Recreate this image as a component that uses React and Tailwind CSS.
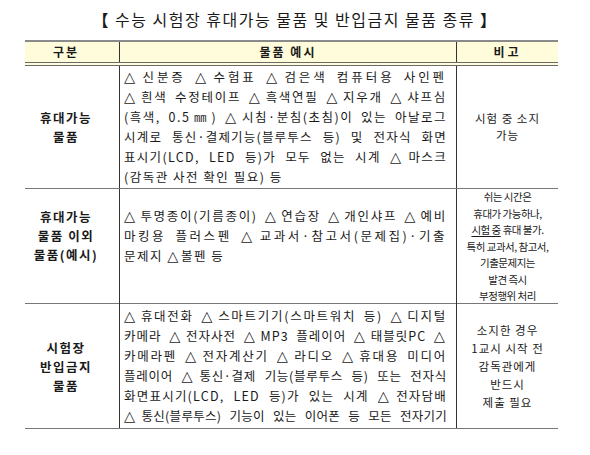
import React, { useLayoutEffect, useRef, useState } from "react";

const font = { fontFamily: '"Noto Sans CJK KR", "Liberation Sans", sans-serif' };

// △는 폭이 좁은 DejaVu 글꼴로
const withTri = (text) =>
    text.split("△").map((part, i) => (
        <React.Fragment key={i}>
            {i > 0 && <span className="font-['DejaVu_Sans'] text-[14.5px] leading-[0] mr-[1px]">△</span>}
            {part}
        </React.Fragment>
    ));

// 한 줄을 칸 너비에 맞춰 자간+어간으로 양쪽 정렬
const JustLine = ({ text }) => {
    const ref = useRef(null);
    const [ls, setLs] = useState(null);

    useLayoutEffect(() => {
        const box = ref.current;
        const natural = box.firstChild.getBoundingClientRect().width;
        const n = [...text].length;
        const spaces = text.split(" ").length - 1;
        setLs(Math.max(0, (box.clientWidth - natural - spaces * 6) / n));
    }, [text]);

    return (
        <div
            ref={ref}
            className={`whitespace-nowrap ${ls === null ? "text-left" : "text-justify [text-align-last:justify]"}`}
        >
            <span style={{ letterSpacing: ls || 0 }}>{withTri(text)}</span>
        </div>
    );
};

const rows = [
    {
        label: ["휴대가능", "물품"],
        lines: [
            "△신분증 △수험표 △검은색 컴퓨터용 사인펜",
            "△흰색 수정테이프 △흑색연필 △지우개 △샤프심",
            "(흑색, 0.5㎜) △시침·분침(초침)이 있는 아날로그",
            "시계로 통신·결제기능(블루투스 등) 및 전자식 화면",
            "표시기(LCD, LED 등)가 모두 없는 시계 △마스크",
        ],
        last: "(감독관 사전 확인 필요) 등",
        note: ["시험 중 소지", "가능"],
        h: "h-[123px]",
        pad: "",
    },
    {
        label: ["휴대가능", "물품 이외", "물품(예시)"],
        lines: [
            "△투명종이(기름종이) △연습장 △개인샤프 △예비",
            "마킹용 플러스펜 △교과서·참고서(문제집)·기출",
        ],
        last: "문제지 △볼펜 등",
        note: null,
        h: "h-[115px]",
        pad: "pb-[22px]",
    },
    {
        label: ["시험장", "반입금지", "물품"],
        lines: [
            "△휴대전화 △스마트기기(스마트워치 등) △디지털",
            "카메라 △전자사전 △MP3 플레이어 △태블릿PC △",
            "카메라펜 △전자계산기 △라디오 △휴대용 미디어",
            "플레이어 △통신·결제 기능(블루투스 등) 또는 전자식",
            "화면표시기(LCD, LED 등)가 있는 시계 △전자담배",
            "△통신(블루투스) 기능이 있는 이어폰 등 모든 전자기기",
        ],
        last: null,
        note: ["소지한 경우", "1교시 시작 전", "감독관에게", "반드시", "제출 필요"],
        h: "h-[125px]",
        pad: "",
    },
];

const App = () => {
    return (
        <div className="w-[590px] h-[455px] bg-white text-[#1a1a1a]" style={font}>
            {/* Title */}
            <div className="pt-[8px] h-[40px] text-center text-[16px] leading-[22px] tracking-[1.5px]">
                <span className="font-bold">【</span> 수능 시험장 휴대가능 물품 및 반입금지 물품 종류{" "}
                <span className="font-bold">】</span>
            </div>

            <div className="ml-[25px] w-[533px]">
                {/* Header */}
                <div className="grid grid-cols-[94px_337px_102px] bg-[#fffcdc] border-t-2 border-[#8a8a8a] border-b-4 border-b-[#6a6a6a] [border-bottom-style:double] h-[26px] text-[12px] font-bold">
                    <div className="flex items-center justify-center pr-[12px] tracking-[2px]">구분</div>
                    <div className="flex items-center justify-center border-l border-[#333] tracking-[2px]">물품 예시</div>
                    <div className="flex items-center justify-center border-l border-[#333] tracking-[3px]">비고</div>
                </div>

                {rows.map((row, i) => (
                    <div
                        key={i}
                        className={`grid grid-cols-[94px_337px_102px] border-b border-[#777] ${row.h}`}
                    >
                        <div className={`flex flex-col items-center justify-center pr-[12px] text-[12.5px] leading-[19px] font-bold tracking-[1.5px] ${row.pad}`}>
                            {row.label.map((t) => (
                                <div key={t}>{t}</div>
                            ))}
                        </div>
                        <div className={`flex flex-col justify-center border-l border-[#333] pl-[4px] pr-[9px] text-[12.5px] leading-[20px] ${row.pad}`}>
                            {row.lines.map((t) => (
                                <JustLine key={t} text={t} />
                            ))}
                            {row.last && (
                                <div className="tracking-[1.5px] whitespace-nowrap">{withTri(row.last)}</div>
                            )}
                        </div>
                        <div className="flex flex-col items-center justify-center border-l border-[#333] text-center">
                            {row.note ? (
                                <div className={`text-[11.5px] tracking-[1px] ${i === 0 ? "leading-[17px]" : "leading-[18px]"}`}>
                                    {row.note.map((t) => (
                                        <div key={t}>{t}</div>
                                    ))}
                                </div>
                            ) : (
                                <div className="text-[10.5px] leading-[16.5px] tracking-[-0.5px]">
                                    <div>쉬는 시간은</div>
                                    <div>휴대가 가능하나,</div>
                                    <div>
                                        <span className="underline underline-offset-2">시험 중</span> 휴대 불가.
                                    </div>
                                    <div>특히 교과서, 참고서,</div>
                                    <div>기출문제지는</div>
                                    <div>발견 즉시</div>
                                    <div>부정행위 처리</div>
                                </div>
                            )}
                        </div>
                    </div>
                ))}
            </div>
        </div>
    );
};

export default App;
